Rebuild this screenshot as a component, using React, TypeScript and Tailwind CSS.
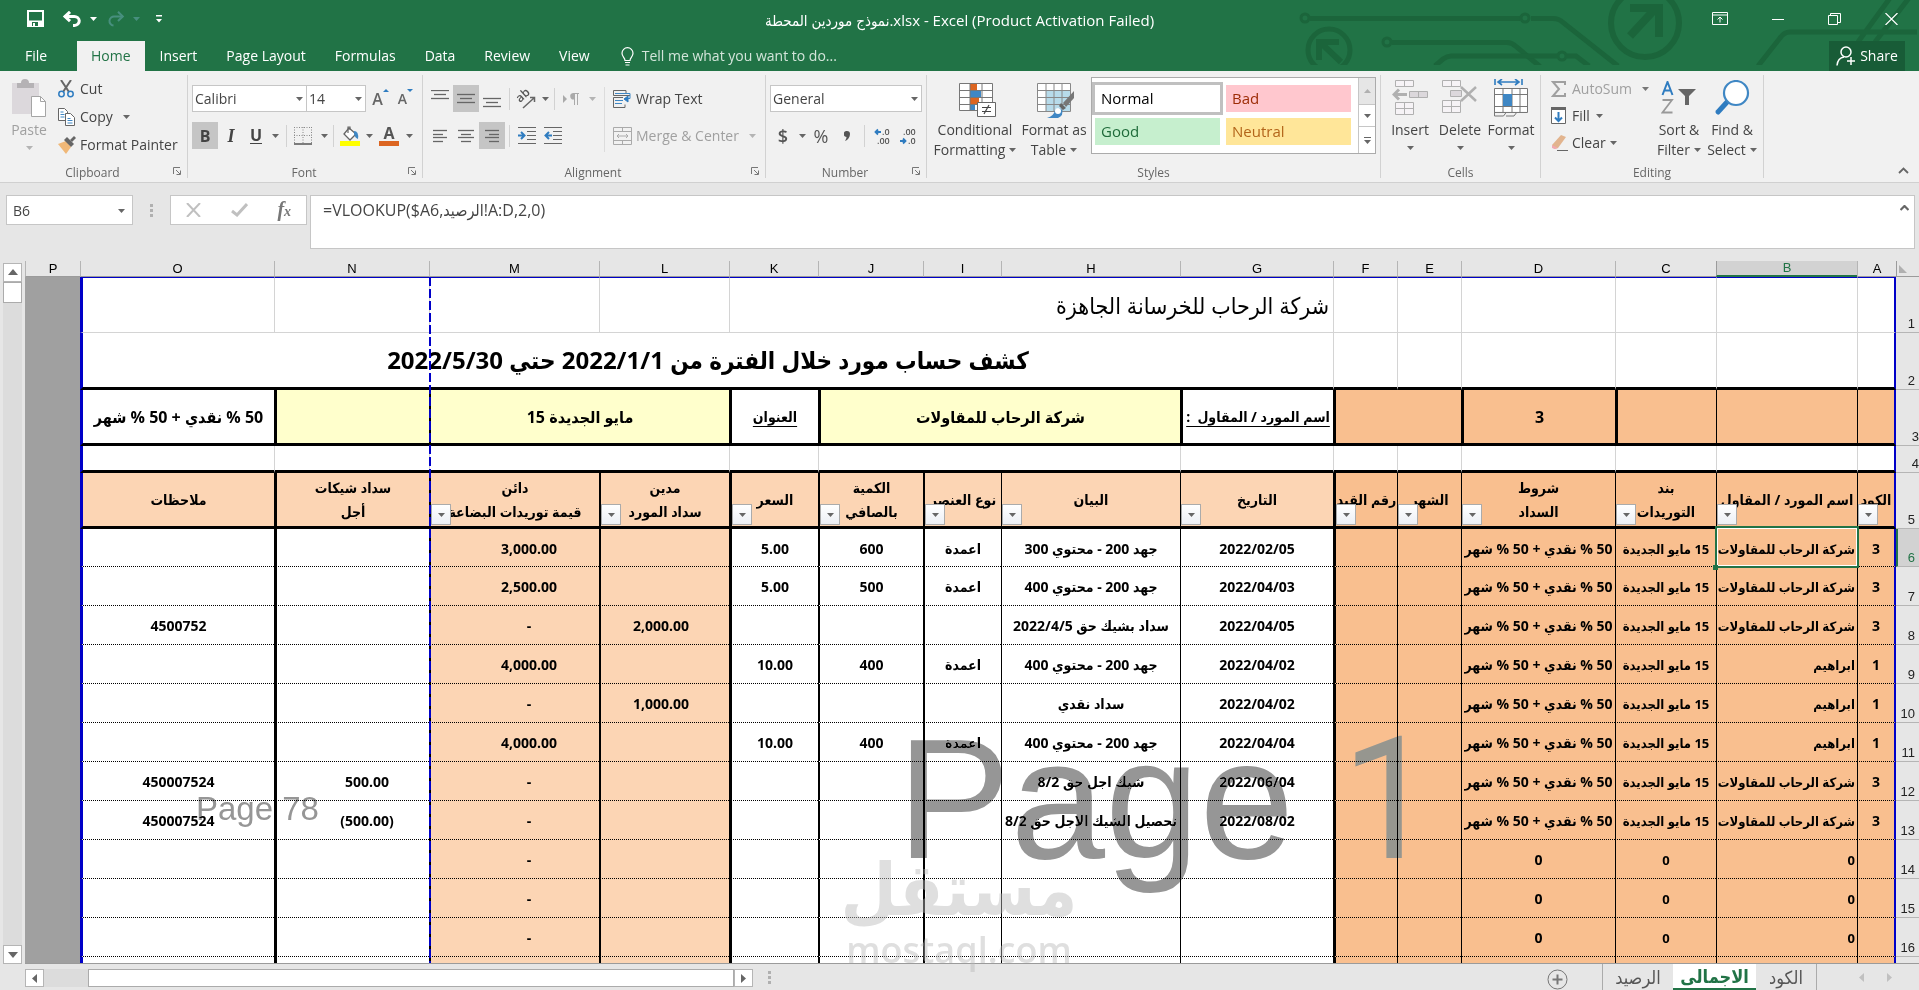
import { useState, type ReactNode } from "react";
import clsx from "clsx";

const LEFT_BORDER: Record<string, string> = {
  A: "border-l border-l-black",
  B: "border-l border-l-black",
  C: "border-l border-l-black",
  D: "border-l border-l-black",
  E: "border-l border-l-black",
  F: "border-l-3 border-l-black",
  G: "border-l border-l-black",
  H: "border-l border-l-black",
  I: "border-l-2 border-l-black",
  J: "border-l-2 border-l-black",
  K: "border-l-3 border-l-black",
  L: "border-l-2 border-l-black",
  M: "border-l-2 border-l-black",
  N: "border-l-3 border-l-black",
  O: "border-l-3 border-l-[#0000c8]",
};

const BODY_CELL: Record<string, string> = {
  A: "bg-[#f9bf8f] text-center border-r-2 border-r-[#0000c8]",
  B: "bg-[#f9bf8f] text-right text-[13px] pl-0 pr-0.5",
  C: "bg-[#f9bf8f] text-center text-[13px]",
  D: "bg-[#f9bf8f] text-center",
  E: "bg-[#f9bf8f]",
  F: "bg-[#f9bf8f]",
  G: "bg-white text-center",
  H: "bg-white text-center",
  I: "bg-white text-center",
  J: "bg-white text-center",
  K: "bg-white text-center",
  L: "bg-[#fcd5b4] text-center pl-0 pr-2",
  M: "bg-[#fcd5b4] text-center pl-7 pr-0",
  N: "bg-white text-center pl-7 pr-0",
  O: "bg-white text-center",
};

const COLUMNS = Object.keys(LEFT_BORDER);

const HEADERS: Record<string, string[]> = {
  A: ["الكود"],
  B: ["اسم المورد / المقاول"],
  C: ["بند", "التوريدات"],
  D: ["شروط", "السداد"],
  E: ["الشهر"],
  F: ["رقم القيد"],
  G: ["التاريخ"],
  H: ["البيان"],
  I: ["نوع العنصر"],
  J: ["الكمية", "بالصافي"],
  K: ["السعر"],
  L: ["مدين", "سداد المورد"],
  M: ["دائن", "قيمة توريدات البضاعة"],
  N: ["سداد شيكات", "أجل"],
  O: ["ملاحظات"],
};

const TERMS = "50 % نقدي + 50 % شهر";
const PLACE = "15 مايو الجديدة";
const RAHAB = "شركة الرحاب للمقاولات";
const IBRAHIM = "ابراهيم";

type Row = Record<string, string>;

const ROWS: Row[] = [
  { A: "3", B: RAHAB, C: PLACE, D: TERMS, G: "2022/02/05", H: "جهد 200 - محتوي 300", I: "اعمدة", J: "600", K: "5.00", M: "3,000.00" },
  { A: "3", B: RAHAB, C: PLACE, D: TERMS, G: "2022/04/03", H: "جهد 200 - محتوي 400", I: "اعمدة", J: "500", K: "5.00", M: "2,500.00" },
  { A: "3", B: RAHAB, C: PLACE, D: TERMS, G: "2022/04/05", H: "سداد بشيك حق 2022/4/5", L: "2,000.00", M: "-", O: "4500752" },
  { A: "1", B: IBRAHIM, C: PLACE, D: TERMS, G: "2022/04/02", H: "جهد 200 - محتوي 400", I: "اعمدة", J: "400", K: "10.00", M: "4,000.00" },
  { A: "1", B: IBRAHIM, C: PLACE, D: TERMS, G: "2022/04/02", H: "سداد نقدي", L: "1,000.00", M: "-" },
  { A: "1", B: IBRAHIM, C: PLACE, D: TERMS, G: "2022/04/04", H: "جهد 200 - محتوي 400", I: "اعمدة", J: "400", K: "10.00", M: "4,000.00" },
  { A: "3", B: RAHAB, C: PLACE, D: TERMS, G: "2022/06/04", H: "شيك اجل حق 8/2", M: "-", N: "500.00", O: "450007524" },
  { A: "3", B: RAHAB, C: PLACE, D: TERMS, G: "2022/08/02", H: "تحصيل الشيك الاجل حق 8/2", M: "-", N: "(500.00)", O: "450007524" },
  { B: "0", C: "0", D: "0", M: "-" },
  { B: "0", C: "0", D: "0", M: "-" },
  { B: "0", C: "0", D: "0", M: "-" },
  {},
];

function Caret({ className = "text-[#666]" }: { className?: string }) {
  return (
    <svg width="7" height="4" viewBox="0 0 7 4" className={clsx("shrink-0", className)} aria-hidden="true">
      <path d="M0 0h7L3.5 4z" fill="currentColor" />
    </svg>
  );
}

function CaretButton({ label, className, light }: { label: string; className?: string; light?: boolean }) {
  return (
    <button type="button" aria-label={label} className={clsx("flex h-[27px] items-center justify-center", className)}>
      <Caret className={light ? "text-[#b4b4b4]" : "text-[#666]"} />
    </button>
  );
}

function Tool({ label, className, active, children }: { label: string; className?: string; active?: boolean; children: ReactNode }) {
  return (
    <button
      type="button"
      aria-label={label}
      className={clsx("flex h-[27px] items-center justify-center hover:bg-[#d5d5d5]", active && "bg-[#c5c5c5]", className ?? "w-[26px]")}
    >
      {children}
    </button>
  );
}

function Sep({ className }: { className?: string }) {
  return <span className={clsx("h-[22px] w-px bg-[#d2d2d2]", className)} />;
}

function Group({ title, launcher, className, children }: { title: string; launcher?: boolean; className: string; children: ReactNode }) {
  return (
    <section aria-label={title} className={clsx("flex shrink-0 flex-col border-r border-[#d2d2d2]", className)}>
      <div className="flex flex-1">{children}</div>
      <div className="flex h-3.5 items-center">
        <h2 className="flex-1 pt-1 text-center text-xs leading-none text-[#666]">{title}</h2>
        {launcher && (
          <button type="button" aria-label={`${title} settings`} className="mr-1.5 -ml-3">
            <svg width="8" height="8" viewBox="0 0 8 8" fill="none" stroke="#777">
              <path d="M.5 7V.5H7M3 3l4 4M7.5 3.500V7.5H3.500" />
            </svg>
          </button>
        )}
      </div>
    </section>
  );
}

function BigButton({ lines, icon, className, caretBelow, dim }: { lines: string[]; icon: ReactNode; className: string; caretBelow?: boolean; dim?: boolean }) {
  return (
    <button type="button" className={clsx("flex flex-col items-center pt-1 text-sm leading-5 whitespace-nowrap", dim ? "text-[#a0a0a0]" : "text-[#444]", className)}>
      <span className="flex h-[41px] items-start justify-center">{icon}</span>
      <span>{lines[0]}</span>
      {caretBelow ? (
        <span className="flex h-4 items-center">
          <Caret className={dim ? "text-[#b4b4b4]" : "text-[#666]"} />
        </span>
      ) : (
        <span className="flex items-center gap-1">
          {lines[1]}
          <Caret />
        </span>
      )}
    </button>
  );
}

function Lines({ rows, width = 18, color = "#666" }: { rows: [number, number, number][]; width?: number; color?: string }) {
  return (
    <svg width={width} height="18" viewBox={`0 0 ${width} 18`} stroke={color} strokeWidth="1.300" aria-hidden="true">
      {rows.map(([x1, x2, y]) => (
        <path key={y} d={`M${x1} ${y}.500H${x2}`} />
      ))}
    </svg>
  );
}

function TitleArt() {
  return (
    <svg className="absolute right-0 top-0" width="639" height="65" viewBox="0 0 639 65" fill="none" stroke="#1b653b" strokeWidth="5" aria-hidden="true">
      <circle cx="25" cy="18" r="4" strokeWidth="3" />
      <path d="M30 18.500H240M251 18.500h22q6 0 10 4L338 66" />
      <circle cx="245" cy="18" r="4" strokeWidth="3" />
      <circle cx="107" cy="42" r="4" strokeWidth="3" />
      <path d="M112 42.500h115q5 0 9 4l24 20" />
      <circle cx="282" cy="56" r="4" strokeWidth="3" />
      <path d="M155 66l8-7q4-3 8-3h106M287 56h9l13 10" />
      <circle cx="49" cy="50" r="21" strokeWidth="5" />
      <path d="M61 62L42 44M39 60V42h20" strokeWidth="6" />
      <circle cx="365" cy="23" r="34" strokeWidth="6" />
      <path d="M350 36l26-28M350 8h29v29" strokeWidth="8" />
      <path d="M478 66l22-28q4-6 10-6h127M578 42l32-44M595 42l34-44" />
    </svg>
  );
}

function TitleBar() {
  return (
    <header className="relative flex h-[41px] items-center bg-[#217346] text-white">
      <div className="flex h-full items-center pl-[27px] pb-1">
        <button type="button" aria-label="Save">
          <svg width="17" height="17" viewBox="0 0 17 17" fill="none" stroke="#fff" strokeWidth="2">
            <path d="M1 1h15v15H1z" />
            <path d="M2 10.500h13v5H2z" fill="#fff" strokeWidth="0" />
            <path d="M5 12h6v4H5z" fill="#217346" strokeWidth="0" />
            <path d="M6 13h2v3H6z" fill="#fff" strokeWidth="0" />
          </svg>
        </button>
        <button type="button" aria-label="Undo" className="ml-[18px] flex items-center gap-2">
          <svg width="20" height="16" viewBox="0 0 20 16" fill="none" stroke="#fff" strokeWidth="3">
            <path d="M2.500 5.500H12a5 4.500 0 0 1 .5 9H11" />
            <path d="M8 .8L3 5.500 8 10.200" />
          </svg>
          <Caret className="text-white" />
        </button>
        <button type="button" aria-label="Redo" className="ml-2.5 flex items-center gap-2 opacity-30">
          <svg width="18" height="16" viewBox="0 0 18 16" fill="none" stroke="#9fd0ff" strokeWidth="2">
            <path d="M16 5.500H7.500a4.500 4.500 0 0 0-1 9" />
            <path d="M11 .8l4.800 4.700L11 10" />
          </svg>
          <Caret className="text-[#9fd0ff]" />
        </button>
        <button type="button" aria-label="Customize Quick Access Toolbar" className="ml-4">
          <svg width="6" height="8" viewBox="0 0 6 8" fill="#fff">
            <path d="M0 0h6v1.500H0zM0 4h6L3 7.500z" />
          </svg>
        </button>
      </div>
      <TitleArt />
      <h1 className="absolute inset-x-0 top-2.5 text-center font-['Open_Sans','DejaVu_Sans_Condensed','DejaVu_Sans',sans-serif] text-[15px] leading-5">
        نموذج موردين المحطة.xlsx - Excel (Product Activation Failed)
      </h1>
      <div className="relative ml-auto flex h-full items-center gap-11 pr-[21px] pb-1">
        <button type="button" aria-label="Ribbon Display Options">
          <svg width="16" height="13" viewBox="0 0 16 13" fill="none" stroke="#fff">
            <path d="M.5.5h15v12H.5zM.5 3h15M8 10.500V5M5.500 7.500L8 5l2.500 2.500" />
          </svg>
        </button>
        <button type="button" aria-label="Minimize">
          <svg width="12" height="12" viewBox="0 0 12 12" stroke="#fff">
            <path d="M0 6.500h12" />
          </svg>
        </button>
        <button type="button" aria-label="Restore Down">
          <svg width="13" height="12" viewBox="0 0 13 12" fill="none" stroke="#fff">
            <path d="M.5 2.500h9v9h-9zM2.500 2.500v-2h10v9h-2.500" />
          </svg>
        </button>
        <button type="button" aria-label="Close">
          <svg width="13" height="12" viewBox="0 0 13 12" stroke="#fff" strokeWidth="1.200">
            <path d="M.5 0l12 12M12.500 0l-12 12" />
          </svg>
        </button>
      </div>
    </header>
  );
}

const TABS = ["Home", "Insert", "Page Layout", "Formulas", "Data", "Review", "View"];

function RibbonTabs() {
  const [tab, setTab] = useState("Home");

  return (
    <nav className="flex h-[30px] gap-px bg-[#217346] text-sm text-white">
      <button type="button" className="w-[76px] pr-1">
        File
      </button>
      {TABS.map((name) => (
        <button
          key={name}
          type="button"
          onClick={() => setTab(name)}
          className={clsx("relative px-3.5", tab === name && "bg-[#f1f1f1] text-[#217346]")}
        >
          {name}
        </button>
      ))}
      <button type="button" className="relative ml-4 flex items-center gap-2 text-[#d3e5da]">
        <svg width="13" height="19" viewBox="0 0 13 19" fill="none" stroke="#fff" strokeWidth="1.200">
          <path d="M4 13.500c0-3-3-3.500-3-7.300a5.500 5.500 0 0 1 11 0c0 3.800-3 4.300-3 7.300zM4 15.500h5M4.500 18h4" />
        </svg>
        Tell me what you want to do...
      </button>
      <button type="button" className="relative mr-3.5 ml-auto flex w-[76px] items-center justify-center gap-1 bg-[#185c37]">
        <svg width="20" height="20" viewBox="0 0 20 20" fill="none" stroke="#fff" strokeWidth="1.500">
          <circle cx="10" cy="6" r="5" />
          <path d="M1 19.500c.5-5 3-8 7-8.500M15 11v8M11 15h8" />
        </svg>
        Share
      </button>
    </nav>
  );
}

function ClipboardGroup() {
  return (
    <Group title="Clipboard" launcher className="w-[188px]">
      <BigButton
        lines={["Paste"]}
        caretBelow
        dim
        className="w-[58px]"
        icon={
          <svg width="36" height="38" viewBox="0 0 36 38">
            <path d="M1 4h27v31H1z" fill="#dcd8dc" />
            <path d="M6 9V4h4q0-4 4-4t4 4h5v5z" fill="#b5b2b5" />
            <path d="M20.500 17.500h9l5 5v15h-14z" fill="#fff" stroke="#a5a5a5" />
            <path d="M29.500 17.500v5h5" fill="none" stroke="#a5a5a5" />
          </svg>
        }
      />
      <div className="flex flex-col text-sm text-[#444]">
        <button type="button" className="flex h-7 items-center gap-1.5">
          <svg width="16" height="18" viewBox="0 0 16 18" fill="none" strokeWidth="1.500">
            <path d="M3 0l8 12M13 0L5 12" stroke="#666" strokeWidth="2" />
            <circle cx="3.500" cy="14" r="2.700" stroke="#2f7cc0" />
            <circle cx="12.500" cy="14" r="2.700" stroke="#2f7cc0" />
          </svg>
          Cut
        </button>
        <button type="button" className="flex h-7 items-center gap-1">
          <svg width="18" height="18" viewBox="0 0 18 18" fill="#fff" stroke="#666">
            <path d="M.5.5h6l3 3v9h-9z" />
            <path d="M7.500 5.500h5l4 4v8h-9z" />
            <path d="M2.500 4h3M2.500 6.500h4M2.500 9h4M9.500 10.500h3M9.500 12.500h5M9.500 15h5" stroke="#3f87c4" />
          </svg>
          Copy
          <Caret className="ml-1.5 text-[#666]" />
        </button>
        <button type="button" className="flex h-7 items-center gap-1 whitespace-nowrap">
          <svg width="18" height="18" viewBox="0 0 18 18">
            <path d="M0 8l8-3 5 6-5 7z" fill="#f0b878" />
            <path d="M6 4l3-3 7 7-3 3z" fill="#666" />
            <path d="M12 4l4-4 2 2-4 4z" fill="#666" />
          </svg>
          Format Painter
        </button>
      </div>
    </Group>
  );
}

function FontGroup() {
  return (
    <Group title="Font" launcher className="w-[235px]">
      <div className="flex flex-col gap-2.5 pt-2.5 pl-1">
        <div className="flex">
          <span className="relative">
            <select aria-label="Font" className="h-[27px] w-[115px] appearance-none border border-[#c6c6c6] bg-white px-0.5 text-sm text-[#444]">
              <option>Calibri</option>
            </select>
            <Caret className="pointer-events-none absolute top-3 right-1 text-[#666]" />
          </span>
          <span className="relative -ml-px">
            <select aria-label="Font size" className="h-[27px] w-[60px] appearance-none border border-[#c6c6c6] bg-white px-0.5 text-sm text-[#444]">
              <option>14</option>
            </select>
            <Caret className="pointer-events-none absolute top-3 right-1 text-[#666]" />
          </span>
          <Tool label="Increase font size" className="ml-0.5 w-[25px]">
            <span className="text-base font-semibold text-[#666]">A</span>
            <svg width="6" height="3" viewBox="0 0 6 3" className="mb-4">
              <path d="M0 3h6L3 0z" fill="#2f7cc0" />
            </svg>
          </Tool>
          <Tool label="Decrease font size" className="w-[25px]">
            <span className="text-sm font-semibold text-[#666]">A</span>
            <svg width="6" height="3" viewBox="0 0 6 3" className="mb-4">
              <path d="M0 0h6L3 3z" fill="#2f7cc0" />
            </svg>
          </Tool>
        </div>
        <div className="flex items-center">
          <Tool label="Bold" active>
            <b className="text-base text-[#444]">B</b>
          </Tool>
          <Tool label="Italic">
            <i className="font-['Liberation_Serif',serif] text-lg font-bold text-[#444]">I</i>
          </Tool>
          <Tool label="Underline" className="w-6">
            <span className="border-b border-[#444] text-base leading-4 font-bold text-[#444]">U</span>
          </Tool>
          <CaretButton label="Underline style" className="w-3.5" />
          <Sep className="ml-1" />
          <Tool label="Borders" className="w-[32px]">
            <svg width="18" height="18" viewBox="0 0 18 18" fill="none" stroke="#888">
              <path d="M.5 0v16M17.500 0v16M0 .5h18M9 0v16M0 8.500h18" strokeDasharray="1 1.500" />
              <path d="M0 17h18" stroke="#555" strokeWidth="1.500" />
            </svg>
          </Tool>
          <CaretButton label="Border style" className="w-2.5" />
          <Sep className="ml-1" />
          <Tool label="Fill color" className="ml-1 w-6">
            <svg width="20" height="20" viewBox="0 0 20 20">
              <path d="M9 2l7 6-6 6-6-6z" fill="#fff" stroke="#666" strokeWidth="1.300" />
              <path d="M8 7V1h2v3" fill="none" stroke="#666" strokeWidth="1.200" />
              <path d="M14 5q5 0 4 8-3-1-4-5z" fill="#3f87c4" />
              <path d="M0 15h20v5H0z" fill="#ff0" />
            </svg>
          </Tool>
          <CaretButton label="Fill colors" className="w-3.5" />
          <Tool label="Font color">
            <span className="border-b-5 border-[#dc6521] px-1 text-base leading-4 font-bold text-[#555]">A</span>
          </Tool>
          <CaretButton label="Font colors" className="w-3.5" />
        </div>
      </div>
    </Group>
  );
}

function IndentIcon({ flip }: { flip?: boolean }) {
  return (
    <svg width="18" height="17" viewBox="0 0 18 17" fill="none" stroke="#666">
      <path d="M0 .5h18M9 4.500h9M9 8.500h9M9 12.500h9M0 16.500h18" />
      <path d={flip ? "M8 8.500H2M5 5L1.500 8.500 5 12" : "M0 8.500h6M3 5l3.500 3.500L3 12"} stroke="#2f7cc0" strokeWidth="2" />
    </svg>
  );
}

function AlignmentGroup() {
  return (
    <Group title="Alignment" launcher className="w-[343px]">
      <div className="flex w-[181px] flex-col gap-2.5 pt-2.5 pl-1">
        <div className="flex items-center">
          <Tool label="Top align">
            <Lines rows={[[0, 18, 0], [3, 15, 4], [0, 18, 8]]} />
          </Tool>
          <Tool label="Middle align" active>
            <Lines rows={[[0, 18, 4], [3, 15, 8], [0, 18, 12]]} />
          </Tool>
          <Tool label="Bottom align">
            <Lines rows={[[0, 18, 8], [3, 15, 12], [0, 18, 16]]} />
          </Tool>
          <Sep className="ml-1" />
          <Tool label="Orientation" className="ml-0.5 w-7">
            <svg width="22" height="20" viewBox="0 0 22 20" className="overflow-visible">
              <text x="0" y="0" transform="translate(5 14) rotate(-42)" fontSize="12" fontWeight="600" fill="#555">ab</text>
              <path d="M8 19L19 9M15 8.500h4.500V13" fill="none" stroke="#666" strokeWidth="1.500" />
            </svg>
          </Tool>
          <CaretButton label="Orientation options" className="w-2.5" />
          <Sep className="ml-1" />
          <Tool label="Text direction" className="w-8">
            <svg width="16" height="12" viewBox="0 0 16 12" fill="#aaa">
              <path d="M0 2l4 4-4 4zM10 0h6v1h-1v11h-1V1h-2v11h-1V6.500a3.200 3.200 0 0 1-1-6.500z" />
            </svg>
          </Tool>
          <CaretButton label="Text direction options" className="w-2.5" light />
        </div>
        <div className="flex items-center">
          <Tool label="Align left">
            <Lines width={14} rows={[[0, 14, 3], [0, 10, 7], [0, 14, 10], [0, 10, 14]]} />
          </Tool>
          <Tool label="Center">
            <Lines width={16} rows={[[0, 16, 3], [3, 13, 7], [0, 16, 10], [3, 13, 14]]} />
          </Tool>
          <Tool label="Align right" active>
            <Lines width={14} rows={[[0, 14, 3], [4, 14, 7], [0, 14, 10], [4, 14, 14]]} />
          </Tool>
          <Sep className="ml-1" />
          <Tool label="Increase indent" className="ml-1 w-[26px]">
            <IndentIcon />
          </Tool>
          <Tool label="Decrease indent">
            <IndentIcon flip />
          </Tool>
        </div>
      </div>
      <div className="my-3 flex flex-col gap-2.5 border-l border-[#dcdcdc] pl-2 text-sm">
        <button type="button" className="-mt-0.5 flex h-[27px] items-center gap-1 text-[#444]">
          <svg width="19" height="18" viewBox="0 0 19 18" fill="none" stroke="#666">
            <path d="M13 3.500V.5H.5v5H17M.5 7.500v10H12v-3M.5 7.500H10" />
            <path d="M2 3.500h15v5h-5M2 10.500h8M2 13.500h7" stroke="#3f87c4" />
            <path d="M11 9l4-3v6z" fill="#2f7cc0" stroke="#2f7cc0" />
          </svg>
          Wrap Text
        </button>
        <button type="button" className="flex h-[27px] items-center gap-1 whitespace-nowrap text-[#a0a0a0]">
          <svg width="19" height="18" viewBox="0 0 19 18" fill="none" stroke="#aaa">
            <path d="M.5.5h18v17H.5zM.5 4.500h18M.5 13.500h18M9.500 0v4M9.500 14v4M4 9h11M6 7L4 9l2 2M13 7l2 2-2 2" />
          </svg>
          Merge &amp; Center
          <Caret className="ml-1.5 text-[#b4b4b4]" />
        </button>
      </div>
    </Group>
  );
}

function DecimalIcon({ more }: { more?: boolean }) {
  return (
    <svg width="19" height="18" viewBox="0 0 19 18" fontSize="9" fontWeight="600" fill="#555" className="overflow-visible">
      <text x={more ? 9 : 4} y="8">{more ? ".0" : ".00"}</text>
      <text x={more ? 4 : 9} y="17">{more ? ".00" : ".0"}</text>
      <path d={more ? "M8 5H2.500M5 2.500L2.500 5 5 7.500" : "M1 14h5.500M4 11.500L6.500 14 4 16.500"} fill="none" stroke="#2f7cc0" strokeWidth="1.800" />
    </svg>
  );
}

function NumberGroup() {
  return (
    <Group title="Number" launcher className="w-[161px]">
      <div className="flex flex-col gap-2.5 pt-2.5 pl-1">
        <span className="relative">
          <select aria-label="Number format" className="h-[27px] w-[152px] appearance-none border border-[#c6c6c6] bg-white px-0.5 text-sm text-[#444]">
            <option>General</option>
          </select>
          <Caret className="pointer-events-none absolute top-3 right-1 text-[#666]" />
        </span>
        <div className="flex items-center text-lg text-[#555]">
          <Tool label="Accounting format">
            <span className="font-semibold">$</span>
          </Tool>
          <CaretButton label="Currency" className="w-3" />
          <Tool label="Percent">%</Tool>
          <Tool label="Comma style">
            <svg width="6" height="10" viewBox="0 0 6 10" fill="#555">
              <path d="M3 0a3 3 0 0 1 3 3c0 3-2 6-5 7 1-2 1.500-3 1.500-4A3 3 0 0 1 3 0z" />
            </svg>
          </Tool>
          <Sep className="ml-1" />
          <Tool label="Increase decimal" className="ml-1 w-[26px]">
            <DecimalIcon more />
          </Tool>
          <Tool label="Decrease decimal">
            <DecimalIcon />
          </Tool>
        </div>
      </div>
    </Group>
  );
}

function StylesGroup() {
  return (
    <Group title="Styles" className="w-[454px]">
      <BigButton
        lines={["Conditional", "Formatting"]}
        className="ml-1 w-[88px]"
        icon={
          <svg width="37" height="36" viewBox="0 0 37 36" className="mt-1 ml-1">
            <path d="M.5.5h33v27H.5z" fill="#fff" />
            <path d="M11 1h7v7h-7zM11 14h9v7h-9z" fill="#dc6521" />
            <path d="M11 8h11v6H11zM11 21h5v6h-5z" fill="#3f87c4" />
            <path d="M.5.5h33v27H.5zM.5 7.500h33M.5 14.500h33M.5 21.500h33M11 0v28M23 0v28" fill="none" stroke="#777" />
            <path d="M18.500 19.500h18v14h-18z" fill="#fff" stroke="#666" />
            <path d="M23 24.500h9M23 28.500h9M30 22l-5 9" stroke="#444" strokeWidth="1.200" />
          </svg>
        }
      />
      <BigButton
        lines={["Format as", "Table"]}
        className="w-[70px]"
        icon={
          <svg width="38" height="36" viewBox="0 0 38 36" className="mt-1 ml-1">
            <path d="M.5.5h33v28H.5z" fill="#fff" />
            <path d="M9 7h24v21H9z" fill="#b7dbea" />
            <path d="M.5.5h33v28H.5zM.5 7.500h33M.5 14.500h33M.5 21.500h33M9 0v28M17 0v28M25 0v28" fill="none" stroke="#888" />
            <path d="M37 8L26 20l3 4 8-9z" fill="#777" />
            <path d="M24 20l5 5-3 2-4-4z" fill="#666" />
            <path d="M10 35q7-2 8-8 4-4 7 0 2 5-4 8z" fill="#3f87c4" />
            <circle cx="21" cy="28" r="3" fill="#fff" />
          </svg>
        }
      />
      <div className="mt-0.5 ml-0.5 flex h-[77px] border border-[#ababab] bg-white text-[15px]">
        <div className="grid grid-cols-[125px_125px] grid-rows-[27px_27px] content-start gap-x-1.5 gap-y-1.5 p-[3px] pt-[7px]">
          <button type="button" className="bg-white pl-1.5 text-left text-black outline-3 outline-[#c0c0c0]">Normal</button>
          <button type="button" className="bg-[#ffc7ce] pl-1.5 text-left text-[#9c2c06]">Bad</button>
          <button type="button" className="bg-[#c6efce] pl-1.5 text-left text-[#1f6b3a]">Good</button>
          <button type="button" className="bg-[#ffe699] pl-1.5 text-left text-[#b3651a]">Neutral</button>
        </div>
        <div className="ml-1 flex w-[17px] flex-col border-l border-[#c6c6c6]">
          <button type="button" aria-label="Previous styles" className="flex h-[26px] items-center justify-center bg-[#e6e6e6]">
            <Caret className="rotate-180 text-[#b0b0b0]" />
          </button>
          <button type="button" aria-label="Next styles" className="flex h-[23px] items-center justify-center border-y border-[#c6c6c6]">
            <Caret />
          </button>
          <button type="button" aria-label="More styles" className="flex flex-1 flex-col items-center justify-center gap-0.5">
            <span className="h-px w-[7px] bg-[#666]" />
            <Caret />
          </button>
        </div>
      </div>
    </Group>
  );
}

function CellsGroup() {
  return (
    <Group title="Cells" className="w-[160px]">
      <BigButton
        lines={["Insert"]}
        caretBelow
        className="ml-1 w-[50px]"
        icon={
          <svg width="37" height="36" viewBox="0 0 37 36" fill="#f6f3f6" stroke="#b0b0b0" className="mt-px">
            <path d="M3.500.5h18v6h-18zM12.500 0v7M3.500 22.500h18v12h-18zM3.500 28.500h18M12.500 22v13" />
            <path d="M17.500 11.500h18v6h-18zM26.500 11v7" fill="#dcd8dc" />
            <path d="M15 14.500H2M7 9.500l-5 5 5 5" fill="none" strokeWidth="3" />
          </svg>
        }
      />
      <BigButton
        lines={["Delete"]}
        caretBelow
        className="w-[50px]"
        icon={
          <svg width="36" height="36" viewBox="0 0 36 36" fill="#f6f3f6" stroke="#b0b0b0" className="mt-px">
            <path d="M.5.5h18v6H.5zM9.500 0v7M.5 20.500h18v12H.5zM.5 26.500h18M9.500 20v13" />
            <path d="M8.500 10.500h11v6h-11z" fill="#dcd8dc" />
            <path d="M19 7l15 14M34 7L19 21" fill="none" strokeWidth="2.500" />
          </svg>
        }
      />
      <BigButton
        lines={["Format"]}
        caretBelow
        className="w-[52px]"
        icon={
          <svg width="35" height="38" viewBox="0 0 35 38">
            <path d="M1 0v6M28 0v6M4 3h21M8 0L4 3l4 3M21 0l4 3-4 3" fill="none" stroke="#2f7cc0" strokeWidth="1.600" />
            <path d="M.5 9.500h33v23H.5z" fill="#fff" />
            <path d="M.5 9.500h33v24H.5zM.5 15.500h33M.5 27.500h33M9 9v24M18 9v24M26 9v24M.5 33v4h9l3-4M12 37h8l3-4" fill="none" stroke="#777" />
            <path d="M9 15h9v12H9z" fill="#3f87c4" />
          </svg>
        }
      />
    </Group>
  );
}

function EditingGroup() {
  return (
    <Group title="Editing" className="w-[223px]">
      <div className="flex w-[114px] flex-col pl-2.5 text-sm text-[#444]">
        <button type="button" className="flex h-[27px] items-center gap-1.5 text-[#a0a0a0]">
          <svg width="15" height="16" viewBox="0 0 15 16" fill="none" stroke="#a0a0a0" strokeWidth="2">
            <path d="M14 4V1H2l6 7-6 7h12v-3" />
          </svg>
          AutoSum
          <Caret className="ml-1 text-[#777]" />
        </button>
        <button type="button" className="flex h-[27px] items-center gap-1.5">
          <svg width="15" height="17" viewBox="0 0 15 17" fill="none" stroke="#666">
            <path d="M.5.5h14v16H.5z" fill="#fff" />
            <path d="M0 1.500h15" strokeWidth="3" />
            <path d="M7.500 5v9M4 10.500L7.500 14l3.500-3.500" stroke="#2f7cc0" strokeWidth="2" />
          </svg>
          Fill
          <Caret />
        </button>
        <button type="button" className="flex h-[27px] items-center gap-1">
          <svg width="17" height="17" viewBox="0 0 17 17">
            <path d="M1 11l9-10 5 2-8 11-4 1z" fill="#e2b48e" />
            <path d="M1 11l6 3-3 1-3-1z" fill="#f1a9b0" />
            <path d="M6 16.500h11" stroke="#666" />
          </svg>
          Clear
          <Caret />
        </button>
      </div>
      <BigButton
        lines={["Sort &", "Filter"]}
        className="w-[48px]"
        icon={
          <svg width="36" height="34" viewBox="0 0 36 34" className="mt-0.5">
            <path d="M1.500 14L6.500 1l5 13M3 9.500h7" fill="none" stroke="#2f7cc0" strokeWidth="2" />
            <path d="M1.500 19H11L1.500 31.500H11.500" fill="none" stroke="#999" strokeWidth="1.800" />
            <path d="M17 8h18l-7 7v9h-4v-9z" fill="#666" />
          </svg>
        }
      />
      <BigButton
        lines={["Find &", "Select"]}
        className="w-[58px]"
        icon={
          <svg width="36" height="36" viewBox="0 0 36 36" className="mt-px">
            <path d="M14 21L4 32" stroke="#2f7cc0" strokeWidth="5" strokeLinecap="round" />
            <circle cx="22" cy="13" r="12" fill="#fff" stroke="#3f87c4" strokeWidth="2.200" />
          </svg>
        }
      />
    </Group>
  );
}

function Ribbon() {
  return (
    <div className="flex h-28 border-b border-[#d0d0d0] bg-[#f1f1f1] py-1">
      <ClipboardGroup />
      <FontGroup />
      <AlignmentGroup />
      <NumberGroup />
      <StylesGroup />
      <CellsGroup />
      <EditingGroup />
      <button type="button" aria-label="Collapse the Ribbon" className="mr-2.5 ml-auto self-end pb-1">
        <svg width="11" height="7" viewBox="0 0 11 7" fill="none" stroke="#666" strokeWidth="1.800">
          <path d="M1 6l4.500-4.500L10 6" />
        </svg>
      </button>
    </div>
  );
}

function FormulaBar() {
  const [formula, setFormula] = useState("=VLOOKUP($A6,الرصيد!A:D,2,0)");

  return (
    <div className="flex items-start gap-[3px] px-1.5 pt-3 pb-3 text-sm text-[#444]">
      <span className="relative">
        <input aria-label="Name Box" defaultValue="B6" className="h-[30px] w-[127px] border border-[#c6c6c6] bg-white px-1.5" />
        <Caret className="absolute top-3.5 right-2 text-[#666]" />
      </span>
      <span className="flex h-[30px] w-[31px] flex-col items-center justify-center gap-0.5">
        <i className="size-[3px] bg-[#b0b0b0]" />
        <i className="size-[3px] bg-[#b0b0b0]" />
        <i className="size-[3px] bg-[#b0b0b0]" />
      </span>
      <div className="flex h-[30px] w-[137px] items-center justify-around border border-[#c6c6c6] bg-white">
        <button type="button" aria-label="Cancel">
          <svg width="15" height="14" viewBox="0 0 15 14" stroke="#c0c0c0" strokeWidth="2">
            <path d="M1 0l13 14M14 0L1 14" />
          </svg>
        </button>
        <button type="button" aria-label="Enter">
          <svg width="17" height="14" viewBox="0 0 17 14" fill="none" stroke="#c0c0c0" strokeWidth="3">
            <path d="M1 8l5 4L16 1" />
          </svg>
        </button>
        <button type="button" aria-label="Insert Function" className="font-['Liberation_Serif',serif] text-xl leading-none font-bold text-[#777] italic">
          f<span className="text-sm">x</span>
        </button>
      </div>
      <div className="relative -mr-0.5 flex-1">
        <textarea
          aria-label="Formula Bar"
          rows={2}
          value={formula}
          onChange={(e) => setFormula(e.target.value)}
          className="block h-[54px] w-full resize-none border border-[#c6c6c6] bg-white px-3 py-1 font-['Open_Sans','DejaVu_Sans_Condensed','DejaVu_Sans',sans-serif] text-base leading-5"
        />
        <button type="button" aria-label="Collapse Formula Bar" className="absolute top-2.5 right-1.5">
          <svg width="9" height="6" viewBox="0 0 9 6" fill="none" stroke="#666" strokeWidth="2.200">
            <path d="M.5 5l4-4 4 4" />
          </svg>
        </button>
      </div>
    </div>
  );
}

function RowNumber({ n }: { n?: number }) {
  const active = n === 6;
  return (
    <th
      scope="row"
      className={clsx(
        "border-b border-b-[#b5b5b5] pr-1 text-right align-bottom font-['Liberation_Sans',sans-serif] text-[13px] leading-4 font-normal",
        active ? "border-l-2 border-l-[#217346] bg-[#d2d2d2] text-[#217346]" : "bg-[#e6e6e6] text-[#222]",
      )}
    >
      {n}
    </th>
  );
}

const OUTSIDE = <td className="bg-[#a0a0a0]" />;
const GRID = "border-l border-l-[#d4d4d4] bg-white";
const THICK = "border-b-3 border-b-black";
const BLUE_RIGHT = "border-r-2 border-r-[#0000c8]";
const BLUE_LEFT = "border-l-3 border-l-[#0000c8]";

function Sheet() {
  return (
    <div dir="rtl" className="relative flex-1 overflow-hidden border-b border-[#9b9b9b]">
      <table className="w-full table-fixed border-separate border-spacing-0 font-['Open_Sans','DejaVu_Sans_Condensed','DejaVu_Sans',sans-serif] text-sm font-bold text-black">
        <colgroup>
          <col className="w-[23px]" />
          <col className="w-[39px]" />
          <col className="w-[141px]" />
          <col className="w-[101px]" />
          <col className="w-[154px]" />
          <col className="w-[64px]" />
          <col className="w-[64px]" />
          <col className="w-[153px]" />
          <col className="w-[179px]" />
          <col className="w-[78px]" />
          <col className="w-[105px]" />
          <col className="w-[89px]" />
          <col className="w-[130px]" />
          <col className="w-[170px]" />
          <col className="w-[155px]" />
          <col className="w-[194px]" />
          <col />
        </colgroup>
        <thead>
          <tr className="h-4 bg-[#e6e6e6] font-['Liberation_Sans',sans-serif] text-[13px] leading-[14px]">
            <td className="border-b border-l border-[#9b9b9b] p-0">
              <svg width="8" height="8" viewBox="0 0 8 8" className="mr-3">
                <path d="M0 0v8h8z" fill="#b0b0b0" />
              </svg>
            </td>
            {[...COLUMNS, "P"].map((c) => (
              <th
                key={c}
                scope="col"
                className={clsx(
                  "relative border-l p-0 font-normal",
                  c === "B" ? "border-b-2 border-b-[#217346] border-l-[#9b9b9b] bg-[#d2d2d2] text-[#217346]" : "border-b border-b-[#9b9b9b] border-l-[#b5b5b5]",
                )}
              >
                {c}
                {c === "M" && (
                  <span className="pointer-events-none absolute top-4 -left-px z-10 h-[900px] w-0.5 bg-[repeating-linear-gradient(to_bottom,#0000c8_0_9px,transparent_9px_12px)]" />
                )}
              </th>
            ))}
          </tr>
        </thead>
        <tbody>
          <tr className="h-14 [&>td:not(:last-child)]:border-t [&>td:not(:last-child)]:border-t-[#0000c8]">
            <RowNumber n={1} />
            <td className={clsx(GRID, BLUE_RIGHT, "border-b border-b-[#d4d4d4]")} />
            {["B", "C", "D", "E", "F"].map((c) => (
              <td key={c} className={clsx(GRID, "border-b border-b-[#d4d4d4]")} />
            ))}
            <td colSpan={5} className={clsx(GRID, "border-b border-b-[#d4d4d4] py-0 pr-1 text-right text-[23px] leading-8 font-normal")}>
              شركة الرحاب للخرسانة الجاهزة
            </td>
            {["L", "M", "N"].map((c) => (
              <td key={c} className={clsx(GRID, "border-b border-b-[#d4d4d4]")} />
            ))}
            <td className={clsx(BLUE_LEFT, "border-b border-b-[#d4d4d4] bg-white")} />
            {OUTSIDE}
          </tr>
          <tr className="h-[57px]">
            <RowNumber n={2} />
            <td className={clsx(GRID, BLUE_RIGHT, THICK)} />
            {["B", "C", "D", "E", "F"].map((c) => (
              <td key={c} className={clsx(GRID, THICK)} />
            ))}
            <td colSpan={9} className={clsx(BLUE_LEFT, THICK, "bg-white p-0 text-center text-2xl")}>
              كشف حساب مورد خلال الفترة من 2022/1/1 حتي 2022/5/30
            </td>
            {OUTSIDE}
          </tr>
          <tr className="h-14 text-base *:p-0">
            <RowNumber n={3} />
            <td className={clsx(THICK, BLUE_RIGHT, "border-l border-l-black bg-[#f9bf8f]")} />
            <td className={clsx(THICK, "border-l border-l-black bg-[#f9bf8f]")} />
            <td className={clsx(THICK, "border-l-3 border-l-black bg-[#f9bf8f]")} />
            <td className={clsx(THICK, "border-l-3 border-l-black bg-[#f9bf8f] text-center")}>3</td>
            <td colSpan={2} className={clsx(THICK, "border-l-3 border-l-black bg-[#f9bf8f]")} />
            <td className={clsx(THICK, "border-l-3 border-l-black bg-white text-center text-sm whitespace-nowrap underline underline-offset-4")}>
              اسم المورد / المقاول &nbsp;:
            </td>
            <td colSpan={3} className={clsx(THICK, "border-l-3 border-l-black bg-[#ffffcc] text-center")}>{RAHAB}</td>
            <td className={clsx(THICK, "border-l-3 border-l-black bg-white text-center text-sm underline underline-offset-4")}>العنوان</td>
            <td colSpan={2} className={clsx(THICK, "border-l-2 border-l-black bg-[#ffffcc] text-center")}>مايو الجديدة 15</td>
            <td className={clsx(THICK, "border-l-3 border-l-black bg-[#ffffcc]")} />
            <td className={clsx(THICK, BLUE_LEFT, "overflow-hidden bg-white text-center whitespace-nowrap")}>{TERMS}</td>
            {OUTSIDE}
          </tr>
          <tr className="h-[27px] *:p-0">
            <RowNumber n={4} />
            <td className={clsx(GRID, BLUE_RIGHT, THICK)} />
            {[1, 1, 1, 1, 1, 1, 3, 1, 2, 1].map((span, i) => (
              <td key={i} colSpan={span} className={clsx(GRID, THICK)} />
            ))}
            <td className={clsx(BLUE_LEFT, THICK, "bg-white")} />
            {OUTSIDE}
          </tr>
          <tr className="h-14">
            <RowNumber n={5} />
            {COLUMNS.map((c, i) => (
              <td
                key={c}
                className={clsx(
                  "relative p-0 text-center",
                  LEFT_BORDER[c],
                  THICK,
                  i < 6 ? "bg-[#f9bf8f]" : "bg-[#fcd5b4]",
                  c === "A" && BLUE_RIGHT,
                )}
              >
                <div className="flex h-[53px] flex-col items-center justify-center overflow-hidden leading-6 whitespace-nowrap">
                  {HEADERS[c].map((line) => (
                    <span key={line}>{line}</span>
                  ))}
                </div>
                {i < 13 && (
                  <button
                    type="button"
                    aria-label={`Filter ${HEADERS[c].join(" ")}`}
                    className="absolute bottom-px left-0 flex h-[21px] w-5 items-center justify-center border border-[#ababab] bg-linear-to-b from-white to-[#eceff5]"
                  >
                    <Caret />
                  </button>
                )}
              </td>
            ))}
            {OUTSIDE}
          </tr>
          {ROWS.map((row, i) => (
            <tr key={i} className={i === 0 ? "h-[38px]" : "h-[39px]"}>
              <RowNumber n={i < 11 ? i + 6 : undefined} />
              {COLUMNS.map((c) => (
                <td
                  key={c}
                  className={clsx("relative border-b border-dotted border-b-black pt-0.5 pb-0 leading-5 whitespace-nowrap [border-left-style:solid] [border-right-style:solid]", !/[BLMN]/.test(c) && "px-0", LEFT_BORDER[c], BODY_CELL[c])}
                >
                  {row[c]}
                  {c === "B" && i === 0 && (
                    <span className="absolute -top-[3px] -right-0.5 -bottom-0.5 -left-0.5 z-10 border-2 border-[#217346]">
                      <span className="absolute inset-0 border border-white" />
                      <span className="absolute -bottom-1 -left-1 size-[5px] bg-[#217346]" />
                    </span>
                  )}
                </td>
              ))}
              {OUTSIDE}
            </tr>
          ))}
        </tbody>
      </table>
      <span dir="ltr" className="pointer-events-none absolute top-[443px] left-[872px] font-['Liberation_Sans',sans-serif] text-[170px] leading-[190px] whitespace-nowrap text-[#969696] mix-blend-darken">
        Page <span className="font-[Roboto,sans-serif]">1</span>
      </span>
      <span dir="ltr" className="pointer-events-none absolute top-[528px] left-[171px] font-['Liberation_Sans',sans-serif] text-[33px] leading-10 whitespace-nowrap text-[#969696] mix-blend-darken">
        Page 78
      </span>
    </div>
  );
}

function ArrowIcon({ dir, color = "#666" }: { dir: "up" | "down" | "left" | "right"; color?: string }) {
  const path = { up: "M0 7h10L5 1z", down: "M0 2h10L5 8z", left: "M7 0v9L2 4.500z", right: "M2 0v9l5-4.500z" }[dir];
  return (
    <svg width="10" height="9" viewBox="0 0 10 9" aria-hidden="true">
      <path d={path} fill={color} />
    </svg>
  );
}

function VerticalScroll() {
  return (
    <div className="mx-[3px] mt-0.5 flex w-[19px] flex-col bg-[#dcdcdc]">
      <button type="button" aria-label="Scroll up" className="flex h-[19px] items-center justify-center border border-[#b5b5b5] bg-white">
        <ArrowIcon dir="up" />
      </button>
      <div className="h-[21px] border border-[#ababab] bg-white" />
      <button type="button" aria-label="Scroll down" className="mt-auto flex h-[19px] items-center justify-center border border-[#b5b5b5] bg-white">
        <ArrowIcon dir="down" />
      </button>
    </div>
  );
}

function BottomBar() {
  const [sheet, setSheet] = useState("الاجمالى");

  return (
    <footer className="flex h-[26px] items-stretch pl-[25px] text-[#555]">
      <div className="mt-[5px] mb-[3px] flex w-[728px] bg-[#dcdcdc]">
        <button type="button" aria-label="Scroll left" className="flex w-[19px] items-center justify-center border border-[#b5b5b5] bg-white">
          <ArrowIcon dir="left" />
        </button>
        <div className="ml-11 flex-1 border border-[#ababab] bg-white" />
        <button type="button" aria-label="Scroll right" className="flex w-[19px] items-center justify-center border border-[#b5b5b5] bg-white">
          <ArrowIcon dir="right" />
        </button>
      </div>
      <span className="ml-[15px] flex flex-col items-center justify-center gap-0.5">
        <i className="size-[3px] bg-[#b0b0b0]" />
        <i className="size-[3px] bg-[#b0b0b0]" />
        <i className="size-[3px] bg-[#b0b0b0]" />
      </span>
      <button type="button" aria-label="New sheet" className="mr-[34px] ml-auto mt-1">
        <svg width="21" height="21" viewBox="0 0 21 21" fill="none" stroke="#777">
          <circle cx="10.500" cy="10.500" r="9.500" />
          <path d="M10.500 5.500v10M5.500 10.500h10" strokeWidth="2" />
        </svg>
      </button>
      <nav className="flex font-['Open_Sans','DejaVu_Sans_Condensed','DejaVu_Sans',sans-serif] text-lg leading-5">
        {["الرصيد", "الاجمالى", "الكود"].map((name, i) => (
          <button
            key={name}
            type="button"
            onClick={() => setSheet(name)}
            className={clsx(
              "text-center",
              i === 0 && "w-[71px] border-l border-[#ababab]",
              i === 1 && "w-[83px]",
              i === 2 && "w-[61px] border-r border-[#ababab]",
              sheet === name && "-mt-px border-b-2 border-b-[#217346] bg-white font-bold text-[#217346]",
            )}
          >
            {name}
          </button>
        ))}
      </nav>
      <div className="mr-6 ml-10 flex items-center gap-[18px]">
        <button type="button" aria-label="Previous sheet">
          <ArrowIcon dir="left" color="#c0c0c0" />
        </button>
        <button type="button" aria-label="Next sheet">
          <ArrowIcon dir="right" color="#c0c0c0" />
        </button>
      </div>
    </footer>
  );
}

export default function App() {
  return (
    <div className="relative flex h-screen flex-col overflow-hidden bg-[#e6e6e6] font-['Open_Sans',sans-serif]">
      <TitleBar />
      <RibbonTabs />
      <Ribbon />
      <FormulaBar />
      <main className="flex min-h-0 flex-1">
        <VerticalScroll />
        <Sheet />
      </main>
      <BottomBar />
      <div className="pointer-events-none absolute bottom-5 left-[842px] flex w-[234px] flex-col items-center font-semibold text-[#b9b9b9] opacity-45">
        <span className="font-['DejaVu_Sans_Condensed','DejaVu_Sans',sans-serif] text-[72px] leading-[80px] font-bold">مستقل</span>
        <span className="text-4xl leading-10">mostaql.com</span>
      </div>
    </div>
  );
}
